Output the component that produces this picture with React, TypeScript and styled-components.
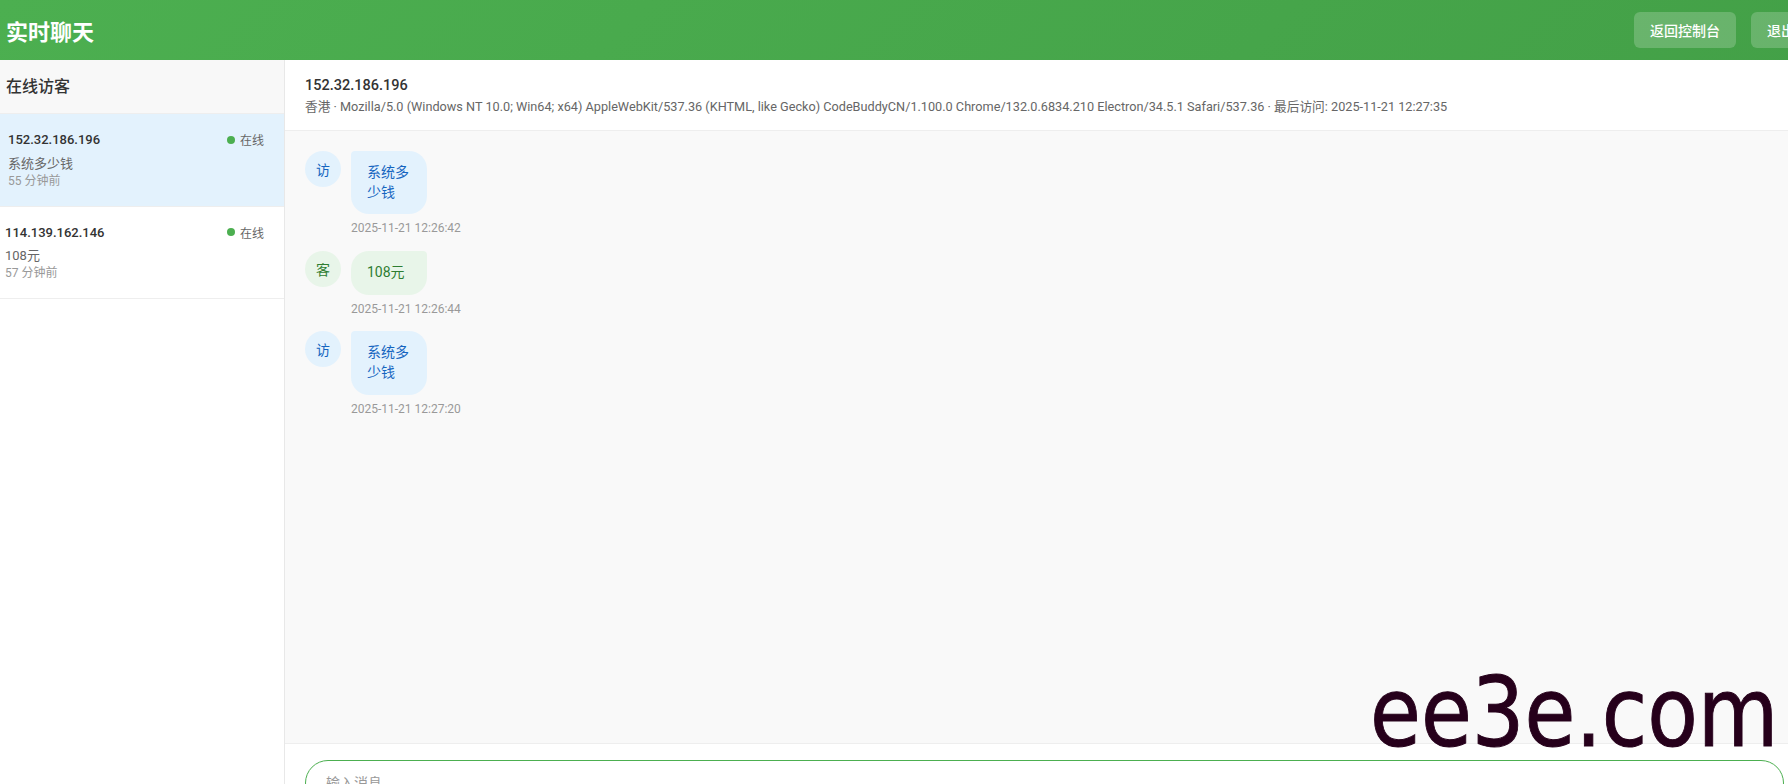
import styled, { createGlobalStyle } from 'styled-components';

const GlobalStyle = createGlobalStyle`
  html, body {
    margin: 0;
    padding: 0;
    overflow: hidden;
    background: #fff;
  }
  body {
    font-family: Roboto, 'Noto Sans CJK SC', sans-serif;
    color: #333;
  }
  * {
    box-sizing: border-box;
  }
`;

const Page = styled.div`
    position: relative;
    width: 1886px;
    height: 822px;
    display: flex;
    flex-direction: column;
`;

const TopBar = styled.header`
    height: 60px;
    flex-shrink: 0;
    display: flex;
    align-items: center;
    justify-content: space-between;
    padding: 0 47px 0 6px;
    background: linear-gradient(135deg, #4caf50 0%, #43a047 100%);
    color: #fff;
`;

const Title = styled.h1`
    margin: 0;
    font-size: 22px;
    font-weight: 700;
`;

const Actions = styled.div`
    display: flex;
    gap: 15px;
`;

const HeaderButton = styled.button`
    height: 36px;
    padding: 0 16px;
    border: none;
    border-radius: 6px;
    background: rgba(255, 255, 255, 0.2);
    color: #fff;
    font-family: inherit;
    font-size: 14px;
    font-weight: 500;
`;

const Main = styled.div`
    flex: 1;
    display: flex;
    min-height: 0;
`;

const Sidebar = styled.aside`
    width: 285px;
    flex-shrink: 0;
    background: #fff;
    border-right: 1px solid #e8e8e8;
    display: flex;
    flex-direction: column;
`;

const SidebarHeader = styled.div`
    padding: 16px 6px;
    background: #f8f8f8;
    border-bottom: 1px solid #eee;
    font-size: 16px;
    line-height: 21px;
    font-weight: 500;
    color: #333;
`;

const VisitorItem = styled.div<{ $active?: boolean }>`
    padding: 16px 20px 16px ${(p) => (p.$active ? 8 : 5)}px;
    background: ${(p) => (p.$active ? '#e3f2fd' : '#fff')};
    border-bottom: 1px solid #eee;
`;

const VisitorTop = styled.div`
    display: flex;
    align-items: center;
    justify-content: space-between;
`;

const VisitorIp = styled.span`
    font-size: 13px;
    line-height: 19.6px;
    font-weight: 500;
    color: #333;
`;

const Status = styled.span`
    display: flex;
    align-items: center;
    gap: 5px;
    font-size: 12px;
    color: #666;
    &::before {
        content: '';
        width: 8px;
        height: 8px;
        border-radius: 50%;
        background: #4caf50;
    }
`;

const Preview = styled.div`
    margin-top: 5px;
    font-size: 13px;
    line-height: 18px;
    color: #666;
`;

const Ago = styled.div`
    font-size: 12px;
    line-height: 17px;
    color: #999;
`;

const ChatPane = styled.section`
    flex: 1;
    display: flex;
    flex-direction: column;
    min-width: 0;
`;

const ChatHeader = styled.div`
    padding: 15px 20px;
    background: #fff;
    border-bottom: 1px solid #eee;
`;

const ChatTitle = styled.div`
    font-size: 14.5px;
    line-height: 21px;
    font-weight: 500;
    color: #333;
`;

const ChatMeta = styled.div`
    margin-top: 2px;
    font-size: 12.7px;
    line-height: 17px;
    color: #666;
    white-space: nowrap;
`;

const Messages = styled.div`
    flex: 1;
    padding: 20px;
    background: #f9f9f9;
    overflow: hidden;
`;

const MessageRow = styled.div`
    display: flex;
    align-items: flex-start;
    gap: 10px;
    margin-bottom: 14px;
`;

type Role = 'visitor' | 'agent';

const Avatar = styled.div<{ $role: Role }>`
    width: 36px;
    height: 36px;
    flex-shrink: 0;
    border-radius: 50%;
    display: flex;
    align-items: center;
    justify-content: center;
    font-size: 14px;
    background: ${(p) => (p.$role === 'visitor' ? '#e3f2fd' : '#e8f5e9')};
    color: ${(p) => (p.$role === 'visitor' ? '#1565c0' : '#2e7d32')};
`;

const MessageBody = styled.div`
    display: flex;
    flex-direction: column;
`;

const Bubble = styled.div<{ $role: Role }>`
    width: 76px;
    padding: 12px 16px;
    font-size: 14px;
    line-height: 1.4;
    border-radius: 18px;
    ${(p) =>
        p.$role === 'visitor'
            ? 'border-top-left-radius: 4px; background: #e3f2fd; color: #1565c0;'
            : 'border-top-right-radius: 4px; background: #e8f5e9; color: #2e7d32;'}
`;

const MessageTime = styled.div`
    margin-top: 6px;
    font-size: 12px;
    line-height: 1.4;
    color: #999;
    white-space: nowrap;
`;

const InputBar = styled.div`
    display: flex;
    gap: 10px;
    padding: 16px 20px;
    background: #fff;
    border-top: 1px solid #eee;
`;

const MessageInput = styled.input`
    flex: 1;
    height: 46px;
    padding: 12px 20px;
    border: 1px solid #4caf50;
    border-radius: 24px;
    outline: none;
    font-family: inherit;
    font-size: 14px;
    color: #333;
    &::placeholder {
        color: #999;
    }
`;

const SendButton = styled.button`
    width: 72px;
    height: 46px;
    border: none;
    border-radius: 24px;
    background: #4caf50;
    color: #fff;
    font-family: inherit;
    font-size: 14px;
`;

const Watermark = styled.div`
    position: absolute;
    left: 1370px;
    top: 665px;
    font-family: 'DejaVu Sans', sans-serif;
    font-size: 96px;
    line-height: 1;
    color: #26001b;
    -webkit-text-stroke: 1px #26001b;
    transform: scaleX(0.862);
    transform-origin: left top;
    pointer-events: none;
    white-space: nowrap;
`;

const visitors = [
    { ip: '152.32.186.196', last: '系统多少钱', ago: '55 分钟前', active: true },
    { ip: '114.139.162.146', last: '108元', ago: '57 分钟前', active: false },
];

const messages: { role: Role; text: string; time: string }[] = [
    { role: 'visitor', text: '系统多少钱', time: '2025-11-21 12:26:42' },
    { role: 'agent', text: '108元', time: '2025-11-21 12:26:44' },
    { role: 'visitor', text: '系统多少钱', time: '2025-11-21 12:27:20' },
];

export default function App() {
    return (
        <Page>
            <GlobalStyle />
            <TopBar>
                <Title>实时聊天</Title>
                <Actions>
                    <HeaderButton>返回控制台</HeaderButton>
                    <HeaderButton>退出登录</HeaderButton>
                </Actions>
            </TopBar>
            <Main>
                <Sidebar>
                    <SidebarHeader>在线访客</SidebarHeader>
                    {visitors.map((v) => (
                        <VisitorItem key={v.ip} $active={v.active}>
                            <VisitorTop>
                                <VisitorIp>{v.ip}</VisitorIp>
                                <Status>在线</Status>
                            </VisitorTop>
                            <Preview>{v.last}</Preview>
                            <Ago>{v.ago}</Ago>
                        </VisitorItem>
                    ))}
                </Sidebar>
                <ChatPane>
                    <ChatHeader>
                        <ChatTitle>152.32.186.196</ChatTitle>
                        <ChatMeta>
                            香港 · Mozilla/5.0 (Windows NT 10.0; Win64; x64) AppleWebKit/537.36 (KHTML, like Gecko) CodeBuddyCN/1.100.0
                            Chrome/132.0.6834.210 Electron/34.5.1 Safari/537.36 · 最后访问: 2025-11-21 12:27:35
                        </ChatMeta>
                    </ChatHeader>
                    <Messages>
                        {messages.map((m, i) => (
                            <MessageRow key={i}>
                                <Avatar $role={m.role}>{m.role === 'visitor' ? '访' : '客'}</Avatar>
                                <MessageBody>
                                    <Bubble $role={m.role}>{m.text}</Bubble>
                                    <MessageTime>{m.time}</MessageTime>
                                </MessageBody>
                            </MessageRow>
                        ))}
                    </Messages>
                    <InputBar>
                        <MessageInput placeholder="输入消息" />
                        <SendButton>发送</SendButton>
                    </InputBar>
                </ChatPane>
            </Main>
            <Watermark>ee3e.com</Watermark>
        </Page>
    );
}
